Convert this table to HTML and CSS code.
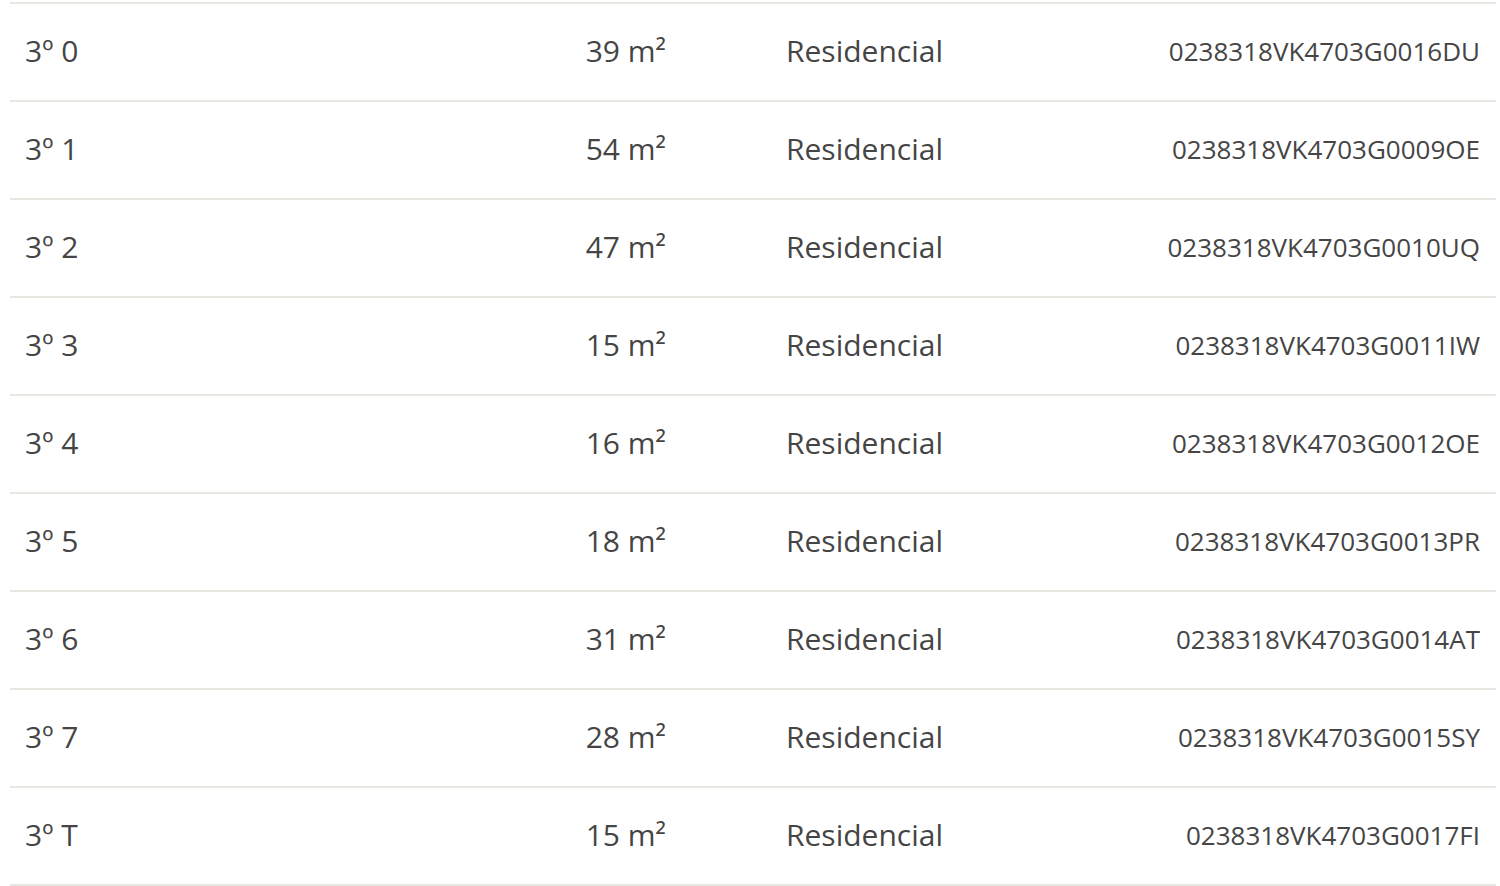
FILE: index.html
```html
<!DOCTYPE html>
<html lang="es">
<head>
<meta charset="utf-8">
<title>Inmuebles</title>
<link rel="stylesheet" href="styles.css">
</head>
<body>
<div class="table">
  <div class="row"><div class="c1">3º 0</div><div class="c2">39 m²</div><div class="c3">Residencial</div><div class="c4">0238318VK4703G0016DU</div></div>
  <div class="row"><div class="c1">3º 1</div><div class="c2">54 m²</div><div class="c3">Residencial</div><div class="c4">0238318VK4703G0009OE</div></div>
  <div class="row"><div class="c1">3º 2</div><div class="c2">47 m²</div><div class="c3">Residencial</div><div class="c4">0238318VK4703G0010UQ</div></div>
  <div class="row"><div class="c1">3º 3</div><div class="c2">15 m²</div><div class="c3">Residencial</div><div class="c4">0238318VK4703G0011IW</div></div>
  <div class="row"><div class="c1">3º 4</div><div class="c2">16 m²</div><div class="c3">Residencial</div><div class="c4">0238318VK4703G0012OE</div></div>
  <div class="row"><div class="c1">3º 5</div><div class="c2">18 m²</div><div class="c3">Residencial</div><div class="c4">0238318VK4703G0013PR</div></div>
  <div class="row"><div class="c1">3º 6</div><div class="c2">31 m²</div><div class="c3">Residencial</div><div class="c4">0238318VK4703G0014AT</div></div>
  <div class="row"><div class="c1">3º 7</div><div class="c2">28 m²</div><div class="c3">Residencial</div><div class="c4">0238318VK4703G0015SY</div></div>
  <div class="row last"><div class="c1">3º T</div><div class="c2">15 m²</div><div class="c3">Residencial</div><div class="c4">0238318VK4703G0017FI</div></div>
</div>
</body>
</html>
```
FILE: styles.css
```css
html, body {
  background: #ffffff;
}
body {
  margin: 2px 4px 0 10px;
  font-family: "Open Sans", "Noto Sans", sans-serif;
  color: #454545;
}
.table {
  width: 1486px;
}
.row {
  display: grid;
  grid-template-columns: 372px 300px 372px 442px;
  height: 96px;
  box-sizing: content-box;
  align-items: center;
  border-top: 2px solid #e7e7e2;
  font-size: 30px;
  line-height: 40px;
}
.row > div {
  margin-top: -2px;
}
.row.last {
  border-bottom: 2px solid #e7e7e2;
}
.c1 {
  padding-left: 15px;
}
.c2 {
  text-align: right;
  padding-right: 16px;
}
.c3 {
  padding-left: 104px;
}
.c4 {
  text-align: right;
  padding-right: 16px;
  font-size: 26px;
}
```
